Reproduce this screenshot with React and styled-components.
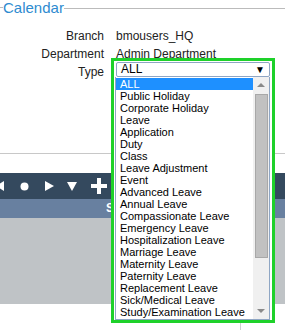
import styled, { createGlobalStyle } from "styled-components";

const types = [
  "ALL",
  "Public Holiday",
  "Corporate Holiday",
  "Leave",
  "Application",
  "Duty",
  "Class",
  "Leave Adjustment",
  "Event",
  "Advanced Leave",
  "Annual Leave",
  "Compassionate Leave",
  "Emergency Leave",
  "Hospitalization Leave",
  "Marriage Leave",
  "Maternity Leave",
  "Paternity Leave",
  "Replacement Leave",
  "Sick/Medical Leave",
  "Study/Examination Leave",
];

const GlobalStyle = createGlobalStyle`
  body {
    margin: 0;
    background: #fff;
    font-family: "Liberation Sans", Arial, sans-serif;
    font-size: 12px;
    color: #222;
    overflow: hidden;
  }
`;

const Page = styled.div`
  position: relative;
  width: 285px;
  height: 330px;
  overflow: hidden;
`;

const Legend = styled.div`
  display: flex;
  align-items: center;
  height: 15px;
  color: #2e8bd0;
  font-size: 15px;
  &::before {
    content: "";
    width: 3px;
    border-top: 1px solid #bbb;
  }
  &::after {
    content: "";
    flex: 1;
    border-top: 1px solid #bbb;
    margin-top: 1px;
  }
`;

const Form = styled.div`
  display: grid;
  grid-template-columns: 104px 1fr;
  column-gap: 12px;
  row-gap: 4px;
  padding-top: 14px;
  line-height: 14px;
`;

const Label = styled.div`
  text-align: right;
  color: #222;
`;

const Value = styled.div`
  color: #222;
`;

const Divider = styled.div`
  margin-top: 74px;
  border-top: 1px solid #c8c8c8;
`;

const Toolbar = styled.div`
  margin-top: 19px;
  height: 26px;
  background: #34495e;
  display: flex;
  align-items: center;
`;

const ToolIcon = styled.svg`
  flex: none;
  margin-left: ${(p) => p.$gap}px;
`;

const HeadBar = styled.div`
  height: 19px;
  background: #6880a0;
  color: #fff;
  font-weight: bold;
  font-size: 12px;
  line-height: 19px;
  padding-left: 106px;
`;

const GreyBody = styled.div`
  height: 86px;
  background: #bfc3c6;
`;

const Footer = styled.div`
  height: 30px;
  display: flex;
  justify-content: flex-end;
  padding-right: 44px;
`;

const FooterLine = styled.div`
  border-left: 1px solid #d0d0d0;
  height: 100%;
`;

const Highlight = styled.div`
  position: absolute;
  left: 111px;
  top: 58px;
  width: 154px;
  padding: 1px 2px 0 2px;
  border: 3px solid #1ed12a;
  background: #fff;
`;

const Select = styled.div`
  height: 13px;
  border: 1px solid #8fa6c4;
  border-radius: 2px;
  display: flex;
  align-items: center;
  justify-content: space-between;
  padding: 0 4px 0 4px;
  color: #000;
  font-size: 12px;
  line-height: 13px;
  background: #fff;
`;

const Arrow = styled.span`
  font-size: 10px;
  color: #000;
`;

const List = styled.div`
  display: flex;
  margin-left: -1px;
  border: 1px solid #8fa6c4;
  border-top: none;
  height: 242px;
`;

const Options = styled.div`
  flex: 1;
  display: flex;
  flex-direction: column;
  padding-top: 1px;
`;

const Option = styled.div`
  height: 12px;
  line-height: 12px;
  padding-left: 4px;
  font-size: 11px;
  white-space: nowrap;
  color: ${(p) => (p.$active ? "#fff" : "#000")};
  background: ${(p) => (p.$active ? "#1e90ff" : "transparent")};
`;

const Scrollbar = styled.div`
  width: 16px;
  background: #f0f0f0;
  display: flex;
  flex-direction: column;
  align-items: center;
`;

const ScrollArrow = styled.div`
  height: 16px;
  display: flex;
  align-items: center;
  justify-content: center;
`;

const Thumb = styled.div`
  width: 11px;
  height: 162px;
  background: #c1c1c1;
  border: 1px solid #a8a8a8;
  margin-top: 1px;
`;

const Spacer = styled.div`
  flex: 1;
`;

function Tri({ dir }) {
  const pts = dir === "up" ? "0,5 4,1 8,5" : "0,1 8,1 4,5";
  return (
    <svg width="8" height="6" viewBox="0 0 8 6">
      <polygon points={pts} fill="#8a8a8a" />
    </svg>
  );
}

function ToolIcons() {
  return (
    <>
      <ToolIcon $gap={-4} width="8" height="10" viewBox="0 0 8 10">
        <polygon points="8,0 8,10 0,5" fill="#fff" />
      </ToolIcon>
      <ToolIcon $gap={16} width="9" height="9" viewBox="0 0 9 9">
        <circle cx="4.5" cy="4.5" r="4" fill="#fff" />
      </ToolIcon>
      <ToolIcon $gap={16} width="9" height="10" viewBox="0 0 9 10">
        <polygon points="0,0 9,5 0,10" fill="#fff" />
      </ToolIcon>
      <ToolIcon $gap={13} width="10" height="9" viewBox="0 0 10 9">
        <polygon points="0,0 10,0 5,9" fill="#fff" />
      </ToolIcon>
      <ToolIcon $gap={14} width="16" height="16" viewBox="0 0 16 16">
        <rect x="6" y="0" width="4" height="16" fill="#fff" />
        <rect x="0" y="6" width="16" height="4" fill="#fff" />
      </ToolIcon>
    </>
  );
}

export default function App() {
  return (
    <Page>
      <GlobalStyle />
      <Legend>Calendar</Legend>
      <Form>
        <Label>Branch</Label>
        <Value>bmousers_HQ</Value>
        <Label>Department</Label>
        <Value>Admin Department</Value>
        <Label>Type</Label>
        <Value />
      </Form>
      <Divider />
      <Toolbar>
        <ToolIcons />
      </Toolbar>
      <HeadBar>S</HeadBar>
      <GreyBody />
      <Footer>
        <FooterLine />
      </Footer>

      <Highlight>
        <Select>
          <span>ALL</span>
          <Arrow>▼</Arrow>
        </Select>
        <List>
          <Options>
            {types.map((t, i) => (
              <Option key={t} $active={i === 0}>
                {t}
              </Option>
            ))}
          </Options>
          <Scrollbar>
            <ScrollArrow>
              <Tri dir="up" />
            </ScrollArrow>
            <Thumb />
            <Spacer />
            <ScrollArrow>
              <Tri dir="down" />
            </ScrollArrow>
          </Scrollbar>
        </List>
      </Highlight>
    </Page>
  );
}
